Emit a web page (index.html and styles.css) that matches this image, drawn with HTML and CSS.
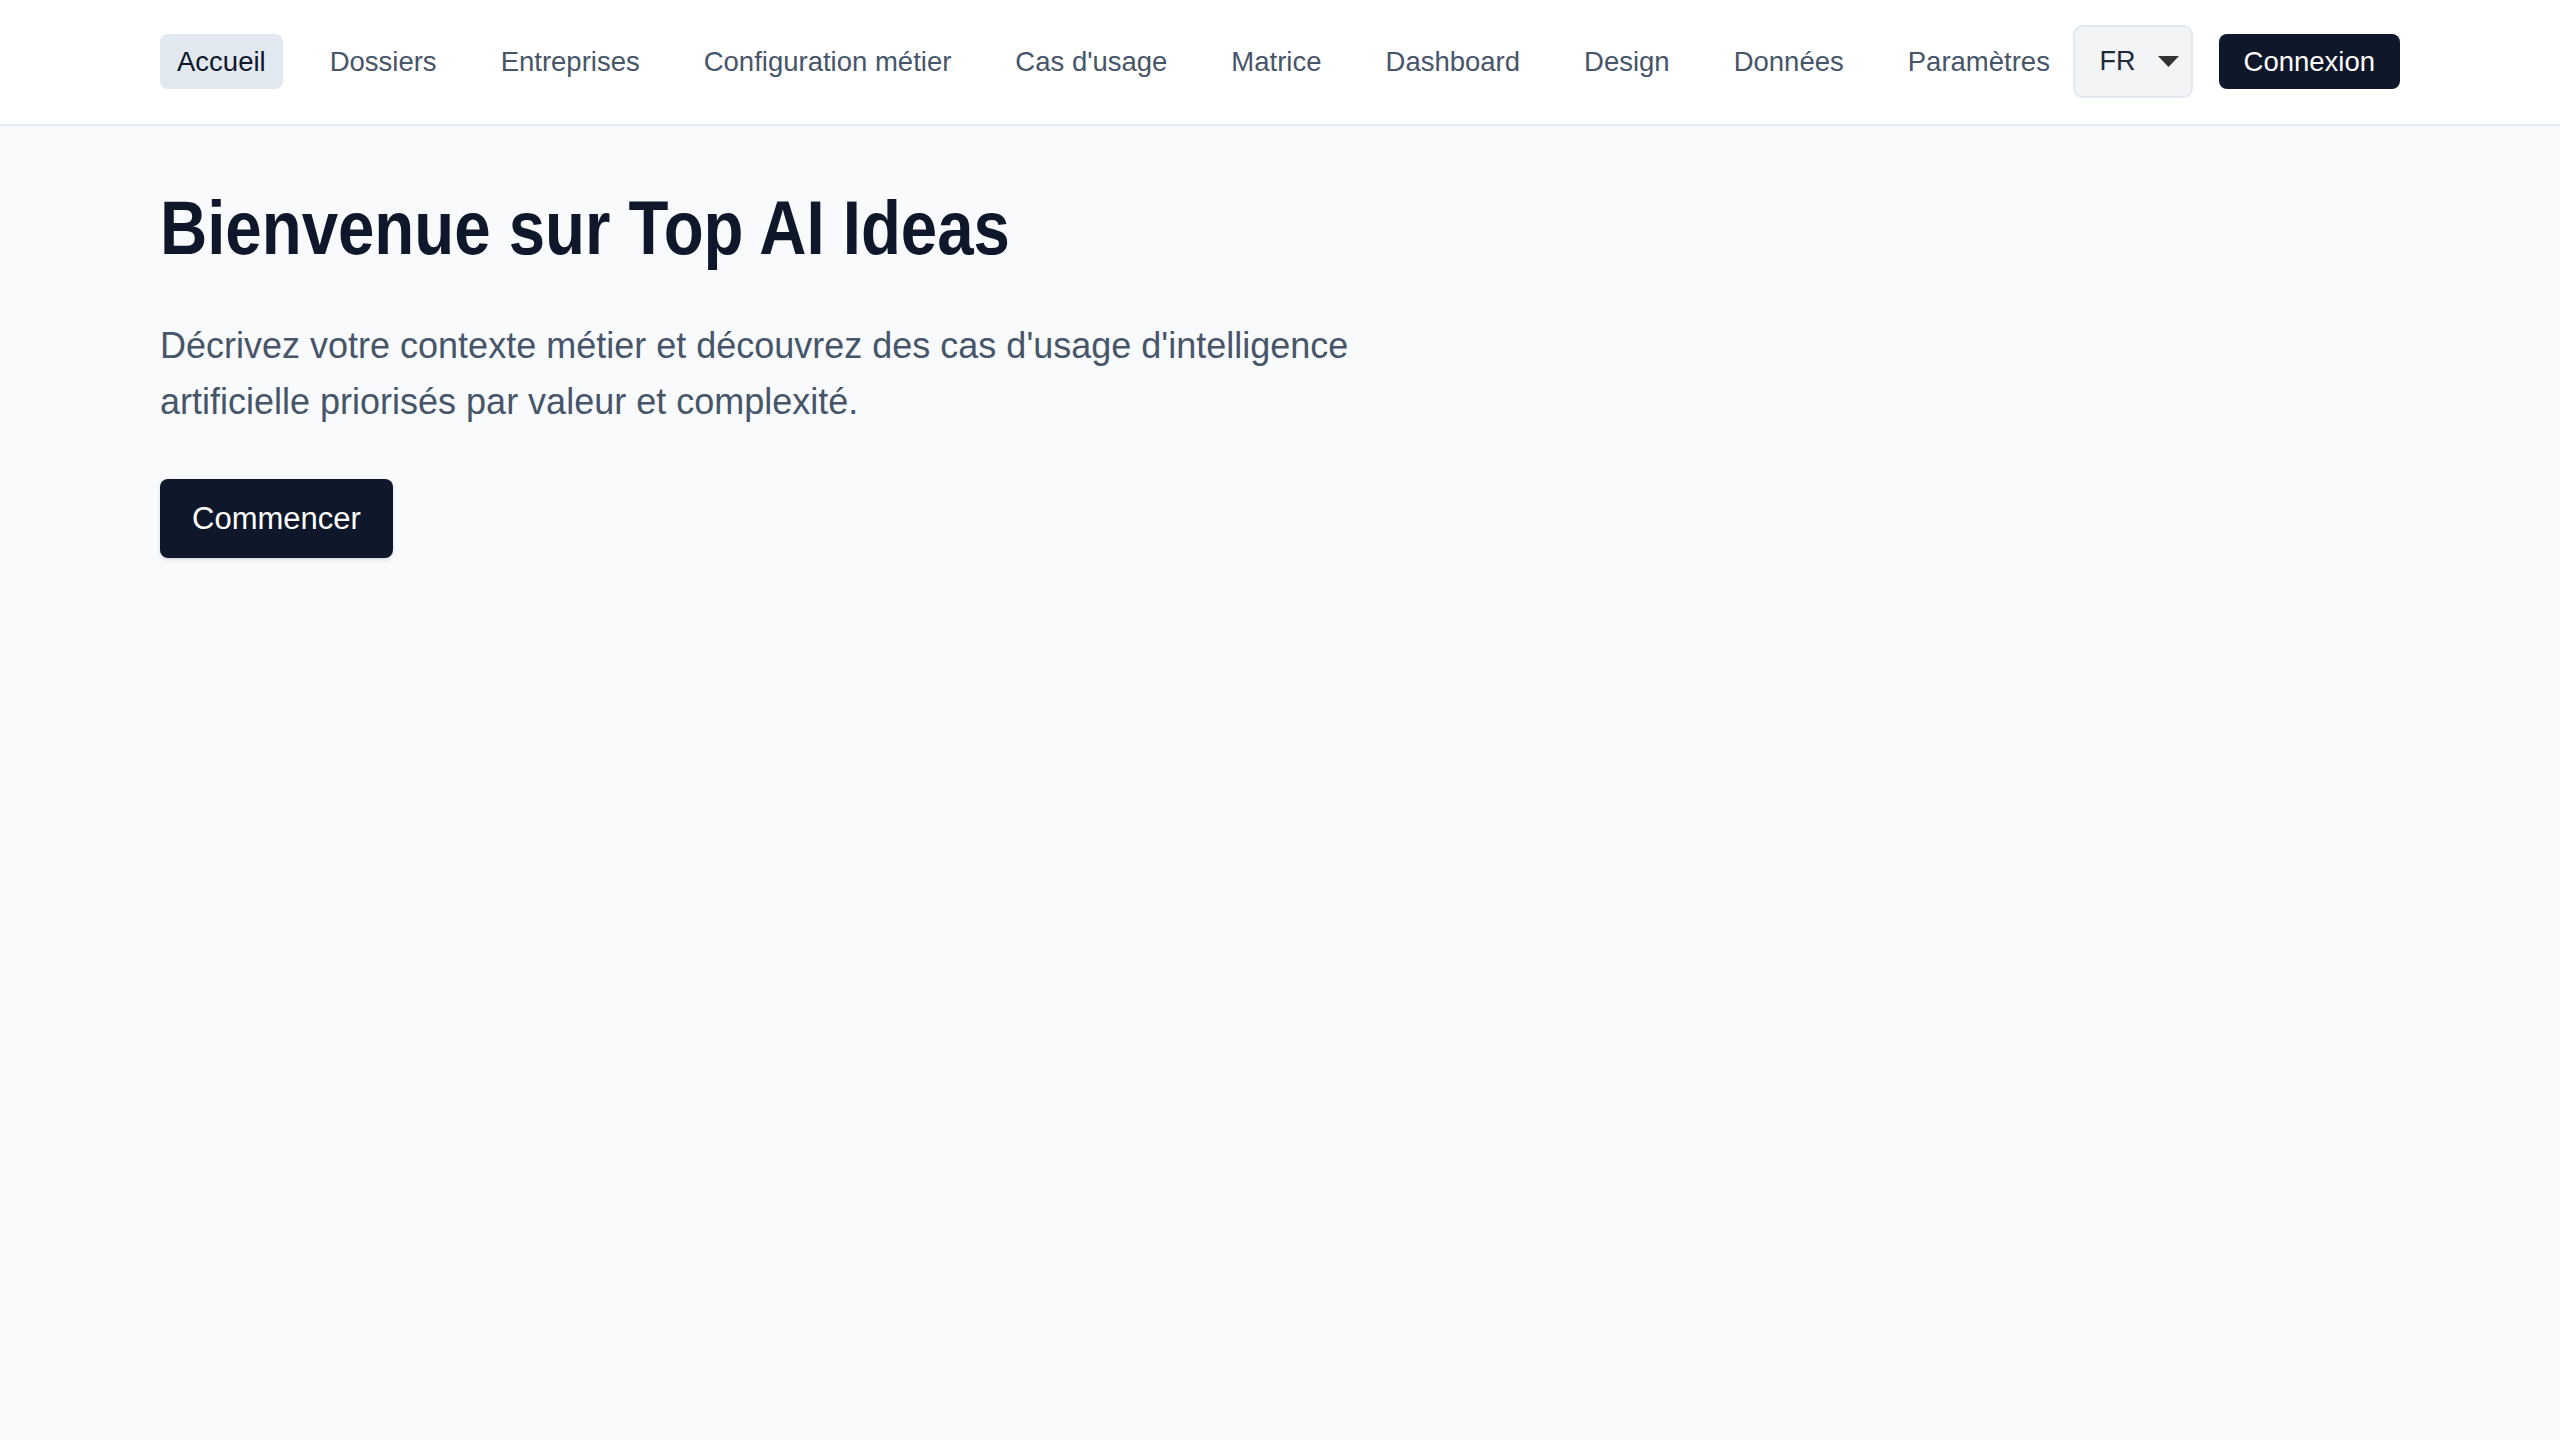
FILE: index.html
```html
<!DOCTYPE html>
<html lang="fr">
<head>
<meta charset="utf-8">
<title>Top AI Ideas</title>
<link rel="stylesheet" href="styles.css">
</head>
<body>
<header class="topbar">
  <nav class="nav">
    <a class="nav-link active" href="#">Accueil</a>
    <a class="nav-link" href="#">Dossiers</a>
    <a class="nav-link" href="#">Entreprises</a>
    <a class="nav-link" href="#">Configuration métier</a>
    <a class="nav-link" href="#">Cas d'usage</a>
    <a class="nav-link" href="#">Matrice</a>
    <a class="nav-link" href="#">Dashboard</a>
    <a class="nav-link" href="#">Design</a>
    <a class="nav-link" href="#">Données</a>
    <a class="nav-link" href="#">Paramètres</a>
  </nav>
  <div class="actions">
    <div class="lang-select">
      <span class="lang-value">FR</span>
      <svg class="caret" width="21" height="11" viewBox="0 0 21 11"><path d="M0 0 H21 L10.5 11 Z" fill="#333"/></svg>
    </div>
    <a class="btn-login" href="#">Connexion</a>
  </div>
</header>
<main class="hero">
  <h1 class="hero-title">Bienvenue sur Top AI Ideas</h1>
  <p class="hero-text">Décrivez votre contexte métier et découvrez des cas d'usage d'intelligence artificielle priorisés par valeur et complexité.</p>
  <a class="btn-start" href="#">Commencer</a>
</main>
</body>
</html>
```
FILE: styles.css
```css
html, body {
  margin: 0;
  padding: 0;
}
body {
  background: #f8fafc;
  font-family: "Liberation Sans", Arial, sans-serif;
  color: #0f172a;
  min-height: 1440px;
}
a {
  text-decoration: none;
}
.topbar {
  background: #ffffff;
  border-bottom: 2px solid #e2e8f0;
  display: flex;
  align-items: center;
  justify-content: space-between;
  padding: 25px 160px 26px;
}
.nav {
  display: flex;
  align-items: center;
  gap: 30px;
}
.nav-link {
  font-size: 27.5px;
  line-height: 55px;
  height: 55px;
  padding: 0 17px;
  border-radius: 8px;
  color: #475569;
  white-space: nowrap;
}
.nav-link.active {
  background: #e2e8f0;
  color: #0f172a;
}
.actions {
  display: flex;
  align-items: center;
  gap: 26px;
}
.lang-select {
  box-sizing: border-box;
  width: 120px;
  height: 73px;
  border: 2px solid #e2e8f0;
  border-radius: 10px;
  background: #f3f4f6;
  display: flex;
  align-items: center;
  justify-content: space-between;
  padding: 0 12px 0 25px;
  font-size: 27px;
  color: #1f2937;
}
.caret {
  display: block;
}
.btn-login {
  display: block;
  background: #0f172a;
  color: #ffffff;
  font-size: 27.5px;
  line-height: 55px;
  height: 55px;
  padding: 0 25px;
  border-radius: 8px;
}
.hero {
  padding: 60px 160px;
}
.hero-title {
  margin: 0;
  font-weight: 700;
  font-size: 76px;
  line-height: 84px;
  color: #0f172a;
  transform: scaleX(0.86);
  transform-origin: left center;
}
.hero-text {
  margin: 48px 0 0;
  max-width: 1280px;
  font-size: 36px;
  line-height: 55.5px;
  color: #475569;
}
.btn-start {
  display: inline-block;
  margin-top: 50px;
  background: #0f172a;
  color: #ffffff;
  font-size: 31px;
  line-height: 47px;
  padding: 16px 32px;
  border-radius: 8px;
  box-shadow: 0 2px 4px rgba(15, 23, 42, 0.12);
}
```
